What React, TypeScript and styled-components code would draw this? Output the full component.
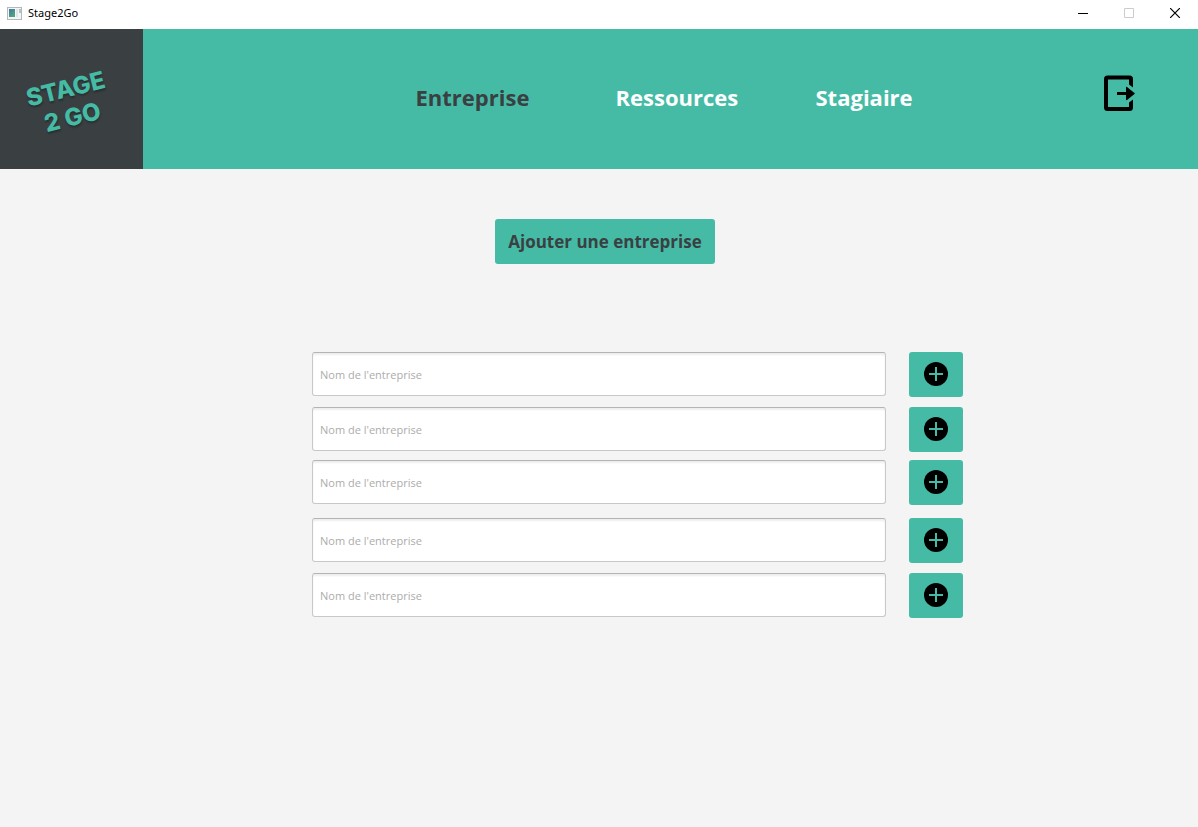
import React from 'react';
import styled, { createGlobalStyle } from 'styled-components';

const teal = '#45bba6';
const slate = '#3a4042';

const GlobalStyle = createGlobalStyle`
  *, *::before, *::after { box-sizing: border-box; }
  body {
    margin: 0;
    background: #f4f4f4;
    font-family: "Open Sans", "Noto Sans", sans-serif;
  }
  button, input { font-family: inherit; }
`;

const TitleBar = styled.div`
  display: flex;
  align-items: center;
  height: 29px;
  padding-left: 7px;
  padding-bottom: 3px;
  background: #fff;
`;

const AppTitle = styled.span`
  flex: 1;
  margin-left: 6px;
  font-size: 11px;
  line-height: 16px;
  font-family: "Noto Sans", sans-serif;
  color: #000;
`;

const WindowButton = styled.button`
  display: grid;
  place-items: center;
  width: 46px;
  height: 26px;
  padding: 0;
  border: 0;
  background: transparent;
  color: #000;

  &:disabled { color: #ccc; }
`;

const Header = styled.header`
  display: flex;
  align-items: center;
  height: 140px;
  padding-right: 62px;
  background: ${teal};
`;

const Logo = styled.a`
  display: grid;
  place-items: center;
  align-self: stretch;
  flex: 0 0 143px;
  padding-top: 8px;
  padding-right: 6px;
  background: ${slate};
  text-decoration: none;
`;

const LogoText = styled.span`
  transform: rotate(-14deg);
  font-family: Inter, sans-serif;
  font-weight: 800;
  font-size: 24px;
  line-height: 29px;
  text-align: center;
  color: ${teal};
  text-shadow: 0 2px 2px rgba(0, 0, 0, 0.3);
`;

const Nav = styled.nav`
  flex: 1;
  display: grid;
  grid-template-columns: 200px 200px 100px;
  justify-content: center;
  padding-left: 84px;
  padding-bottom: 4px;
`;

const NavLink = styled.a<{ $active?: boolean }>`
  font-weight: 700;
  font-size: 22px;
  line-height: 32px;
  text-decoration: none;
  color: ${({ $active }) => ($active ? slate : '#fff')};
`;

const LogoutButton = styled.button`
  display: block;
  padding: 0;
  margin-bottom: 12px;
  border: 0;
  background: transparent;
  color: #000;
  line-height: 0;
`;

const Main = styled.main`
  display: flex;
  flex-direction: column;
  align-items: center;
  padding: 50px 24px;
`;

const AddCompany = styled.button`
  width: 220px;
  height: 45px;
  margin-left: 12px;
  padding: 0;
  border: 0;
  border-radius: 3px;
  background: ${teal};
  color: ${slate};
  font-weight: 700;
  font-size: 17px;
  line-height: 24px;
  white-space: nowrap;
`;

const CompanyList = styled.div`
  width: 100%;
  max-width: 651px;
  margin: 88px 0 0 77px;
`;

const CompanyRow = styled.form<{ $gap: number }>`
  display: flex;
  align-items: flex-start;
  gap: 23px;
  margin-bottom: ${({ $gap }) => $gap}px;
`;

const CompanyInput = styled.input`
  flex: 1;
  min-width: 0;
  height: 44px;
  padding: 1px 7px 0;
  border: 1px solid #c8c8c8;
  border-top-color: #b4b4b4;
  border-radius: 3px;
  background: #fff;
  box-shadow: inset 0 2px 2px rgba(0, 0, 0, 0.07);
  font-size: 11px;
  line-height: 16px;
  color: #333;

  &::placeholder { color: #acacac; opacity: 1; }
`;

const RowButton = styled.button`
  display: grid;
  place-items: center;
  width: 54px;
  height: 45px;
  padding: 0 0 1px;
  border: 0;
  border-radius: 3px;
  background: ${teal};
`;

const AppIcon = () => (
  <svg width="15" height="13" viewBox="0 0 15 13" aria-hidden="true">
    <defs>
      <linearGradient id="pane" x1="0" y1="0" x2="0.6" y2="1">
        <stop offset="0" stopColor="#4573a8" />
        <stop offset="1" stopColor="#4fa87c" />
      </linearGradient>
    </defs>
    <rect x="0.5" y="0.5" width="14" height="12" fill="#f5f5f5" stroke="#b5b8ba" />
    <rect x="2" y="2" width="6" height="8" fill="url(#pane)" />
    <rect x="9" y="2" width="2" height="8" fill="#e2e4e6" />
    <path d="M12 2h2v4h-2z" fill="#a9c7c4" />
  </svg>
);

const ExitIcon = () => (
  <svg width="32" height="37" viewBox="0 0 32 37" aria-hidden="true">
    <path
      d="M29 12.500V4a3.500 3.500 0 0 0-3.500-3.500H3.500A3.500 3.500 0 0 0 0 4V32.500a3.500 3.500 0 0 0 3.500 3.500H25.500a3.500 3.500 0 0 0 3.500-3.500V24.500L25 27.500V32H4V4.500H25V9.500Z"
      fill="currentColor"
    />
    <path
      d="M13 17h9v-4.500q0-1 1-0.500l7.500 6q0.700 0.500 0 1l-7.500 6q-1 0.500-1-0.500V20h-9z"
      fill="currentColor"
    />
  </svg>
);

const PlusIcon = () => (
  <svg width="24" height="24" viewBox="0 0 24 24" aria-hidden="true">
    <circle cx="12" cy="12" r="12" fill="#000" />
    <path d="M12 5v14M5 12h14" stroke={teal} strokeWidth="2" />
  </svg>
);

const rows = [
  { id: 1, gap: 10 },
  { id: 2, gap: 8 },
  { id: 3, gap: 13 },
  { id: 4, gap: 10 },
  { id: 5, gap: 0 },
];

export default function App() {
  return (
    <>
      <GlobalStyle />
      <TitleBar>
        <AppIcon />
        <AppTitle>Stage2Go</AppTitle>
        <WindowButton type="button" aria-label="Réduire">
          <svg width="10" height="10" viewBox="0 0 10 10">
            <path d="M0 5.500h10" stroke="currentColor" />
          </svg>
        </WindowButton>
        <WindowButton type="button" aria-label="Agrandir" disabled>
          <svg width="10" height="10" viewBox="0 0 10 10">
            <path d="M0.500 0.500h9v9h-9z" fill="none" stroke="currentColor" />
          </svg>
        </WindowButton>
        <WindowButton type="button" aria-label="Fermer">
          <svg width="10" height="10" viewBox="0 0 10 10">
            <path d="M0 0l10 10M10 0L0 10" stroke="currentColor" strokeWidth="1.200" />
          </svg>
        </WindowButton>
      </TitleBar>
      <Header>
        <Logo href="#">
          <LogoText>
            STAGE
            <br />2 GO
          </LogoText>
        </Logo>
        <Nav>
          <NavLink href="#entreprise" $active aria-current="page">Entreprise</NavLink>
          <NavLink href="#ressources">Ressources</NavLink>
          <NavLink href="#stagiaire">Stagiaire</NavLink>
        </Nav>
        <LogoutButton type="button" aria-label="Se déconnecter">
          <ExitIcon />
        </LogoutButton>
      </Header>
      <Main>
        <AddCompany type="button">Ajouter une entreprise</AddCompany>
        <CompanyList>
          {rows.map(({ id, gap }) => (
            <CompanyRow key={id} $gap={gap} onSubmit={(e) => e.preventDefault()}>
              <CompanyInput type="text" aria-label="Nom de l'entreprise" placeholder="Nom de l'entreprise" />
              <RowButton type="submit" aria-label="Ajouter">
                <PlusIcon />
              </RowButton>
            </CompanyRow>
          ))}
        </CompanyList>
      </Main>
    </>
  );
}
